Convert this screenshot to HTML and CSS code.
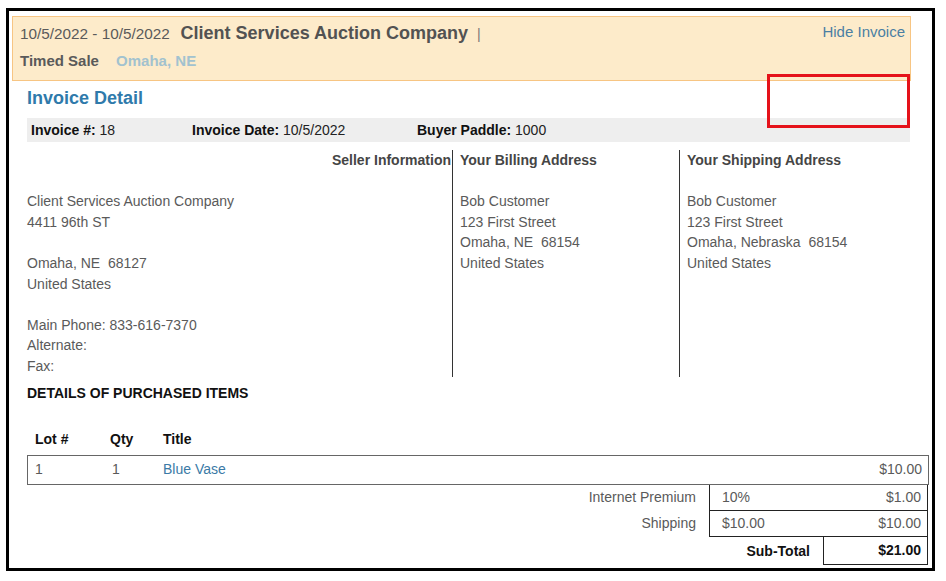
FILE: index.html
```html
<!DOCTYPE html>
<html>
<head>
<meta charset="utf-8">
<link rel="stylesheet" href="styles.css">
</head>
<body>
<div class="frame">
  <div class="hdr">
    <div class="hdr-row1">
      <div class="hdr-title">
        <span class="date">10/5/2022 - 10/5/2022</span>
        <span class="company">Client Services Auction Company</span>
        <span class="pipe">|</span>
      </div>
      <a class="hide">Hide Invoice</a>
    </div>
    <div class="hdr-row2">
      <span class="saletype">Timed Sale</span>
      <span class="loc">Omaha, NE</span>
    </div>
  </div>

  <div class="content">
    <h2 class="inv-title">Invoice Detail</h2>
    <div class="inv-bar">
      <span class="f1"><b>Invoice #:</b> 18</span>
      <span class="f2"><b>Invoice Date:</b> 10/5/2022</span>
      <span class="f3"><b>Buyer Paddle:</b> 1000</span>
    </div>

    <div class="addr">
      <div class="col seller">
        <div class="col-h right">Seller Information</div>
        <div class="blank"></div>
        <div>Client Services Auction Company</div>
        <div>4411 96th ST</div>
        <div class="blank"></div>
        <div>Omaha, NE&nbsp; 68127</div>
        <div>United States</div>
        <div class="blank"></div>
        <div>Main Phone: 833-616-7370</div>
        <div>Alternate:</div>
        <div>Fax:</div>
      </div>
      <div class="col billing">
        <div class="col-h">Your Billing Address</div>
        <div class="blank"></div>
        <div>Bob Customer</div>
        <div>123 First Street</div>
        <div>Omaha, NE&nbsp; 68154</div>
        <div>United States</div>
      </div>
      <div class="col shipping">
        <div class="col-h">Your Shipping Address</div>
        <div class="blank"></div>
        <div>Bob Customer</div>
        <div>123 First Street</div>
        <div>Omaha, Nebraska&nbsp; 68154</div>
        <div>United States</div>
      </div>
    </div>

    <div class="details-h">DETAILS OF PURCHASED ITEMS</div>

    <div class="items-head">
      <span class="c-lot">Lot #</span>
      <span class="c-qty">Qty</span>
      <span class="c-title">Title</span>
    </div>
    <div class="item-row">
      <span class="c-lot">1</span>
      <span class="c-qty">1</span>
      <a class="c-title link">Blue Vase</a>
      <span class="c-price">$10.00</span>
    </div>

    <div class="sum-row">
      <span class="sum-label">Internet Premium</span>
      <div class="sum-box"><span>10%</span><span>$1.00</span></div>
    </div>
    <div class="sum-row">
      <span class="sum-label">Shipping</span>
      <div class="sum-box"><span>$10.00</span><span>$10.00</span></div>
    </div>
    <div class="sum-row total">
      <span class="total-label">Sub-Total</span>
      <div class="total-box">$21.00</div>
    </div>
  </div>

  <div class="highlight"></div>
</div>
</body>
</html>
```

FILE: styles.css
```css
* { box-sizing: border-box; }
html, body { margin: 0; padding: 0; background: #fff; }
body {
  font-family: "Liberation Sans", Arial, sans-serif;
  color: #5a5a5a;
  font-size: 14px;
}
.frame {
  position: relative;
  margin: 8px 0 0 6px;
  width: 929px;
  height: 563px;
  border: 3px solid #000;
}
.hdr {
  margin: 5px 21px 0 3px;
  height: 65px;
  border: 1px solid #f7c583;
  background: #fdebca;
  padding: 1px 5px 0 7px;
}
.hdr-row1 {
  display: flex;
  justify-content: space-between;
  align-items: flex-start;
  height: 30px;
}
.hdr-title { line-height: 30px; white-space: nowrap; }
.date { font-size: 15.3px; color: #5a5a5a; }
.company { font-size: 18px; font-weight: bold; color: #525252; margin-left: 7px; }
.pipe { font-size: 14px; color: #777; margin-left: 5px; }
.hide { font-size: 15px; color: #4a7fa3; line-height: 27px; }
.hdr-row2 { line-height: 26px; font-weight: bold; font-size: 15px; }
.saletype { color: #5a5a5a; }
.loc { color: #a2c2cf; margin-left: 13px; }

.content { padding: 0 4px 0 18px; }
.inv-title {
  margin: 5px 0 0 0;
  font-size: 18px;
  line-height: 24px;
  color: #2f7aab;
  font-weight: bold;
}
.inv-bar {
  margin-top: 8px;
  width: 883px;
  height: 24px;
  background: #eeeeee;
  padding-left: 4px;
  display: flex;
  align-items: center;
  font-size: 14px;
  color: #222;
}
.inv-bar b { color: #111; }
.f1 { width: 161px; }
.f2 { width: 225px; }

.addr {
  margin-top: 8px;
  display: flex;
  line-height: 20.6px;
  font-size: 14px;
}
.seller { width: 425px; padding-right: 1px; }
.billing { width: 227px; border-left: 1px solid #333; padding-left: 7px; }
.shipping { flex: 1; border-left: 1px solid #333; padding-left: 7px; }
.col-h { font-weight: bold; color: #454545; }
.right { text-align: right; }
.blank { height: 20.6px; }

.details-h {
  margin-top: 6px;
  line-height: 20px;
  font-size: 14px;
  font-weight: bold;
  color: #111;
}
.items-head {
  margin-top: 26px;
  display: flex;
  line-height: 20px;
  font-weight: bold;
  color: #111;
  font-size: 14px;
  padding-left: 8px;
}
.c-lot { width: 75px; }
.c-qty { width: 53px; }
.c-title { flex: 1; }
.item-row {
  margin-top: 6px;
  width: 902px;
  height: 30px;
  border: 1px solid #666;
  display: flex;
  align-items: center;
  padding: 0 6px 2px 7px;
}
.item-row .c-qty { padding-left: 2px; }
.link { color: #3b7aa6; }
.c-price { margin-left: auto; }

.sum-row {
  width: 901px;
  display: flex;
  justify-content: flex-end;
  align-items: stretch;
  height: 26px;
}
.sum-label {
  align-self: center;
  padding-right: 13px;
  padding-bottom: 1px;
}
.sum-box {
  width: 219px;
  border: 1px solid #222;
  border-top: none;
  display: flex;
  justify-content: space-between;
  align-items: center;
  padding: 0 6px 1px 12px;
}
.sum-row.total { height: 28px; }
.total-label {
  align-self: center;
  font-weight: bold;
  color: #111;
  padding-right: 13px;
}
.total-box {
  width: 105px;
  border: 1px solid #222;
  border-top: none;
  text-align: right;
  padding-right: 6px;
  font-weight: bold;
  color: #111;
  line-height: 27px;
}

.highlight {
  position: absolute;
  left: 758px;
  top: 63px;
  width: 143px;
  height: 54px;
  border: 3px solid #e5121a;
}
```
